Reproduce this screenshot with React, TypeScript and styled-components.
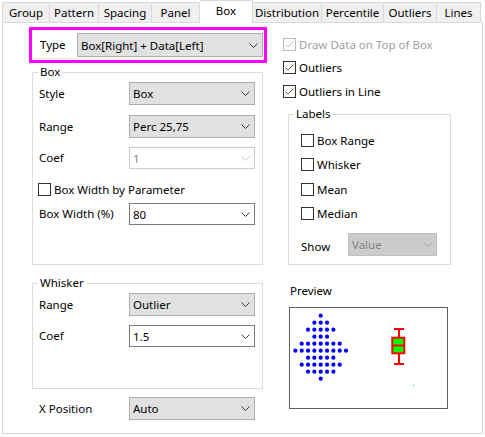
import React from 'react';
import styled, { createGlobalStyle } from 'styled-components';

const GlobalStyle = createGlobalStyle`
  html, body { margin: 0; padding: 0; background: #fff; }
  body { font-family: "Noto Sans", "Open Sans", sans-serif; font-size: 11.5px; color: #000; }
  * { box-sizing: border-box; }
`;

const Window = styled.div`
  width: 485px;
  height: 437px;
  background: #fff;
  overflow: hidden;
`;

const TabBar = styled.div`
  display: flex;
  align-items: flex-end;
  height: 22px;
  padding-left: 2px;
`;

const Tab = styled.div<{ $w: number; $active?: boolean; $first?: boolean }>`
  position: relative;
  z-index: ${(p) => (p.$active ? 1 : 0)};
  width: ${(p) => p.$w}px;
  height: ${(p) => (p.$active ? 23 : 20)}px;
  margin-bottom: ${(p) => (p.$active ? -1 : 0)}px;
  padding-top: 2px;
  background: ${(p) => (p.$active ? '#fff' : '#f0f0f0')};
  border: 1px solid #d9d9d9;
  border-bottom: none;
  border-left-width: ${(p) => (p.$first ? 1 : 0)}px;
  line-height: 16px;
  text-align: center;
  white-space: nowrap;
`;

const Panel = styled.div`
  margin-left: 2px;
  width: 481px;
  height: 412px;
  border: 1px solid #d9d9d9;
  padding-left: 26px;
  display: grid;
  grid-template-columns: 238px 167px;
  column-gap: 16px;
  align-items: start;
`;

const Column = styled.div`
  display: flex;
  flex-direction: column;
`;

const TypeFrame = styled.div`
  margin-top: 4px;
  height: 36px;
  border: 3px solid #ff00ff;
  display: flex;
  align-items: center;
  padding-left: 8px;
`;

const Group = styled.fieldset<{ $w: number; $mt: number; $ml: number; $pb: number }>`
  margin: ${(p) => p.$mt}px 0 0 ${(p) => p.$ml}px;
  width: ${(p) => p.$w}px;
  min-width: 0;
  padding: 0 0 ${(p) => p.$pb}px 0;
  border: 1px solid #dcdcdc;
`;

const Legend = styled.legend`
  margin-left: 5px;
  padding: 0 2px;
  line-height: 16px;
  font-size: 11.5px;
`;

const FormRow = styled.div<{ $mt: number; $pl: number }>`
  display: flex;
  align-items: center;
  margin-top: ${(p) => p.$mt}px;
  padding-left: ${(p) => p.$pl}px;
`;

const FieldLabel = styled.span<{ $w: number; $drop?: number }>`
  width: ${(p) => p.$w}px;
  flex: none;
  line-height: 16px;
  padding-top: ${(p) => p.$drop ?? 0}px;
  white-space: nowrap;
`;

type ComboKind = 'list' | 'edit' | 'off' | 'offList';

const comboColors: Record<ComboKind, { bg: string; border: string; text: string; arrow: string }> = {
  list: { bg: '#e1e1e1', border: '#adadad', text: '#000', arrow: '#3c3c3c' },
  edit: { bg: '#fff', border: '#7a7a7a', text: '#000', arrow: '#3c3c3c' },
  off: { bg: '#fff', border: '#cccccc', text: '#8a8296', arrow: '#bfbfbf' },
  offList: { bg: '#cccccc', border: '#bfbfbf', text: '#838383', arrow: '#a8a8a8' },
};

const ComboBox = styled.div<{ $w: number; $h: number; $kind: ComboKind }>`
  width: ${(p) => p.$w}px;
  height: ${(p) => p.$h}px;
  flex: none;
  display: flex;
  align-items: center;
  justify-content: space-between;
  padding: 0 4px 0 3px;
  background: ${(p) => comboColors[p.$kind].bg};
  border: 1px solid ${(p) => comboColors[p.$kind].border};
  color: ${(p) => comboColors[p.$kind].text};
  white-space: nowrap;
`;

const Combo = ({ value, w, h = 23, kind = 'list' }: { value: string; w: number; h?: number; kind?: ComboKind }) => (
  <ComboBox $w={w} $h={h} $kind={kind}>
    <span>{value}</span>
    <svg width="9" height="5" viewBox="0 0 9 5">
      <path d="M0.5 0.5 L4.5 4.5 L8.5 0.5" fill="none" stroke={comboColors[kind].arrow} strokeWidth="1" />
    </svg>
  </ComboBox>
);

const CheckRow = styled.div<{ $mt: number; $pl?: number; $disabled?: boolean }>`
  display: flex;
  align-items: center;
  gap: 3px;
  height: 16px;
  margin-top: ${(p) => p.$mt}px;
  padding-left: ${(p) => p.$pl ?? 0}px;
  color: ${(p) => (p.$disabled ? '#a0a0a0' : '#000')};
  white-space: nowrap;
`;

const Box = styled.span<{ $disabled?: boolean }>`
  width: 13px;
  height: 13px;
  flex: none;
  display: flex;
  align-items: center;
  justify-content: center;
  border: 1px solid ${(p) => (p.$disabled ? '#bcbcbc' : '#333')};
  background: #fff;
`;

const Check = ({ label, checked, disabled, mt, pl }: { label: string; checked?: boolean; disabled?: boolean; mt: number; pl?: number }) => (
  <CheckRow $mt={mt} $pl={pl} $disabled={disabled}>
    <Box $disabled={disabled}>
      {checked && (
        <svg width="11" height="11" viewBox="0 0 11 11">
          <path d="M1.5 5.5 L4 8 L9.5 2.5" fill="none" stroke={disabled ? '#bcbcbc' : '#555'} strokeWidth="1" />
        </svg>
      )}
    </Box>
    <span>{label}</span>
  </CheckRow>
);

const PreviewTitle = styled.div`
  margin: 18px 0 0 7px;
  line-height: 16px;
`;

const PreviewFrame = styled.div`
  margin: 8px 0 0 6px;
  width: 159px;
  height: 102px;
  border: 1px solid #5e5e5e;
  background: #fff;
`;

const tabs = [
  ['Group', 48],
  ['Pattern', 49],
  ['Spacing', 53],
  ['Panel', 48],
  ['Box', 53],
  ['Distribution', 69],
  ['Percentile', 62],
  ['Outliers', 53],
  ['Lines', 44],
] as const;

const dotRows = [1, 3, 5, 3, 7, 9, 5, 7, 5, 1];

const PreviewPlot = () => {
  const dots: React.ReactNode[] = [];
  dotRows.forEach((n, r) => {
    for (let i = 0; i < n; i++) {
      const cx = 30.7 + (i - (n - 1) / 2) * 6.33;
      dots.push(<circle key={`${r}-${i}`} cx={cx} cy={7.7 + r * 7} r={2.1} fill="#0000ff" />);
    }
  });
  return (
    <svg width="157" height="100" viewBox="0 0 157 100">
      {dots}
      <g stroke="#ff0000" strokeWidth="2" fill="none">
        <line x1="104" y1="21" x2="114" y2="21" />
        <line x1="109" y1="21" x2="109" y2="29.7" />
        <line x1="104" y1="56" x2="114" y2="56" />
        <line x1="109" y1="45.3" x2="109" y2="56" />
        <rect x="102.3" y="29.7" width="12" height="15.6" fill="#00ff00" />
        <line x1="102.3" y1="37.5" x2="114.3" y2="37.5" />
      </g>
      <rect x="123" y="77" width="1" height="1" fill="#00d000" />
    </svg>
  );
};

export default function App() {
  return (
    <Window>
      <GlobalStyle />
      <TabBar>
        {tabs.map(([name, w], i) => (
          <Tab key={name} $w={w} $first={i === 0} $active={name === 'Box'}>
            {name}
          </Tab>
        ))}
      </TabBar>
      <Panel>
        <Column>
          <TypeFrame>
            <FieldLabel $w={37}>Type</FieldLabel>
            <Combo value="Box[Right] + Data[Left]" w={186} h={24} />
          </TypeFrame>

          <Group $w={231} $mt={1} $ml={3} $pb={39}>
            <Legend>Box</Legend>
            <FormRow $mt={2} $pl={6}>
              <FieldLabel $w={90}>Style</FieldLabel>
              <Combo value="Box" w={126} />
            </FormRow>
            <FormRow $mt={10} $pl={6}>
              <FieldLabel $w={90}>Range</FieldLabel>
              <Combo value="Perc 25,75" w={126} />
            </FormRow>
            <FormRow $mt={9} $pl={6}>
              <FieldLabel $w={90}>Coef</FieldLabel>
              <Combo value="1" w={126} h={22} kind="off" />
            </FormRow>
            <Check label="Box Width by Parameter" mt={12} pl={5} />
            <FormRow $mt={6} $pl={6}>
              <FieldLabel $w={90}>Box Width (%)</FieldLabel>
              <Combo value="80" w={126} h={22} kind="edit" />
            </FormRow>
          </Group>

          <Group $w={231} $mt={10} $ml={3} $pb={41}>
            <Legend>Whisker</Legend>
            <FormRow $mt={2} $pl={6}>
              <FieldLabel $w={90}>Range</FieldLabel>
              <Combo value="Outlier" w={126} />
            </FormRow>
            <FormRow $mt={9} $pl={6}>
              <FieldLabel $w={90}>Coef</FieldLabel>
              <Combo value="1.5" w={126} h={22} kind="edit" />
            </FormRow>
          </Group>

          <FormRow $mt={8} $pl={10}>
            <FieldLabel $w={90}>X Position</FieldLabel>
            <Combo value="Auto" w={126} />
          </FormRow>
        </Column>

        <Column>
          <Check label="Draw Data on Top of Box" checked disabled mt={13} />
          <Check label="Outliers" checked mt={7} />
          <Check label="Outliers in Line" checked mt={8} />

          <Group $w={163} $mt={7} $ml={5} $pb={8}>
            <Legend>Labels</Legend>
            <Check label="Box Range" mt={10} pl={12} />
            <Check label="Whisker" mt={8} pl={12} />
            <Check label="Mean" mt={9} pl={12} />
            <Check label="Median" mt={8} pl={12} />
            <FormRow $mt={12} $pl={12}>
              <FieldLabel $w={47} $drop={5}>Show</FieldLabel>
              <Combo value="Value" w={89} kind="offList" />
            </FormRow>
          </Group>

          <PreviewTitle>Preview</PreviewTitle>
          <PreviewFrame>
            <PreviewPlot />
          </PreviewFrame>
        </Column>
      </Panel>
    </Window>
  );
}
